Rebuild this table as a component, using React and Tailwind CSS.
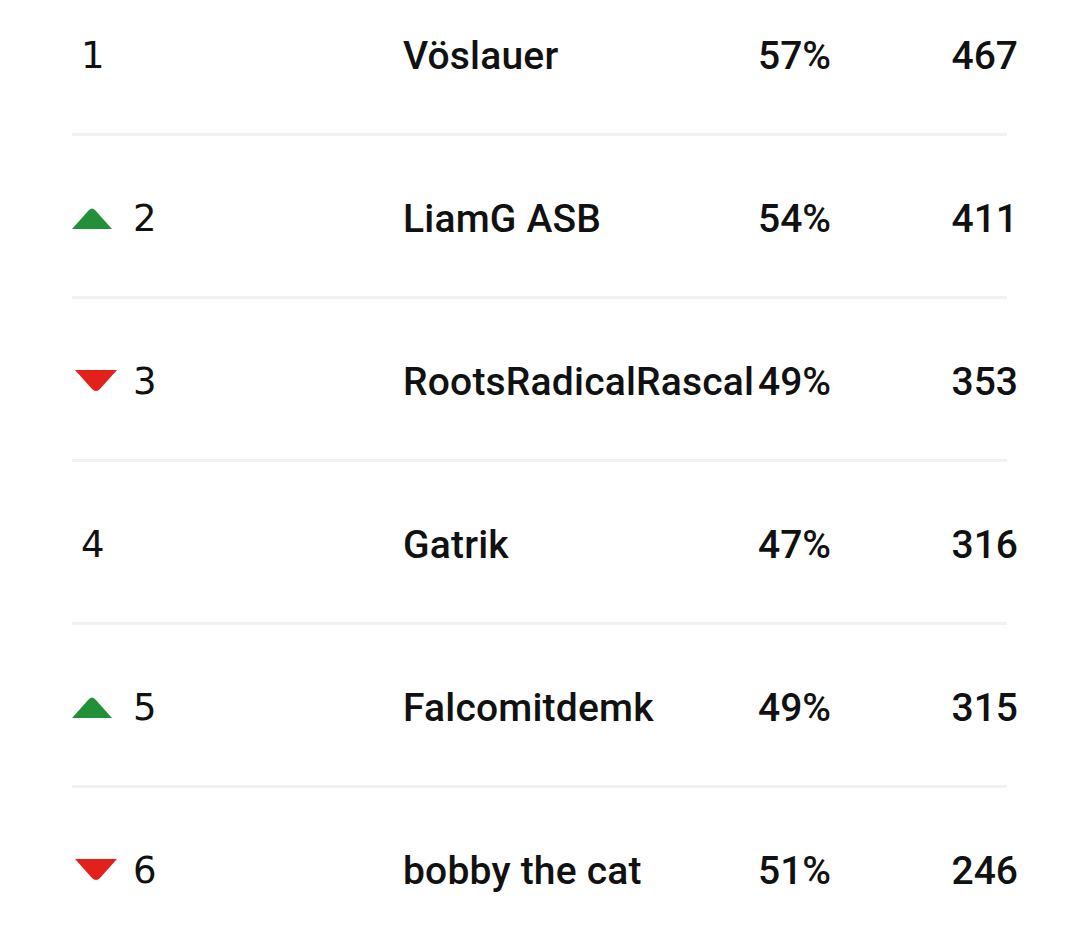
const rows = [
  { rank: 1, move: null, name: 'Vöslauer', pct: '57%', pts: 467 },
  { rank: 2, move: 'up', name: 'LiamG ASB', pct: '54%', pts: 411 },
  { rank: 3, move: 'down', name: 'RootsRadicalRascal', pct: '49%', pts: 353 },
  { rank: 4, move: null, name: 'Gatrik', pct: '47%', pts: 316 },
  { rank: 5, move: 'up', name: 'Falcomitdemk', pct: '49%', pts: 315 },
  { rank: 6, move: 'down', name: 'bobby the cat', pct: '51%', pts: 246 },
];

const UpArrow = () => (
  <svg width="40" height="21" viewBox="0 0 40 21" className="block">
    <path d="M17 2 Q20 -1 23 2 L40 21 L0 21 Z" fill="#238f3a" />
  </svg>
);

const DownArrow = () => (
  <svg width="42" height="22" viewBox="0 0 42 22" className="block ml-[3px]">
    <path d="M0 0 L42 0 L25 19 Q21 23 17 19 Z" fill="#e2211b" />
  </svg>
);

export default function App() {
  return (
    <div className="w-[1080px] h-[944px] bg-white overflow-hidden">
      <div className="ml-[72px] w-[946px] -mt-[27px]">
        {rows.map((r, i) => (
          <div key={r.rank}>
            <div className="h-[160px] pt-[6px] grid grid-cols-[331px_355px_1fr] items-center text-[#111] text-[39px] font-medium" style={{ fontFamily: 'Roboto, sans-serif' }}>
              <div className="flex items-center">
                {r.move ? (
                  <div className="w-[61px] -mt-[2px]">{r.move === 'up' ? <UpArrow /> : <DownArrow />}</div>
                ) : (
                  <div className="w-[9px]" />
                )}
                <span className="text-[37px] font-normal" style={{ fontFamily: '"DejaVu Sans", sans-serif' }}>{r.rank}</span>
              </div>
              <div className="whitespace-nowrap tracking-[0.2px]">{r.name}</div>
              <div className="flex justify-between">
                <span>{r.pct}</span>
                <span>{r.pts}</span>
              </div>
            </div>
            {i < rows.length - 1 && <div className="h-[3px] mr-[11px] bg-[#f1f1ef]" />}
          </div>
        ))}
      </div>
    </div>
  );
}
